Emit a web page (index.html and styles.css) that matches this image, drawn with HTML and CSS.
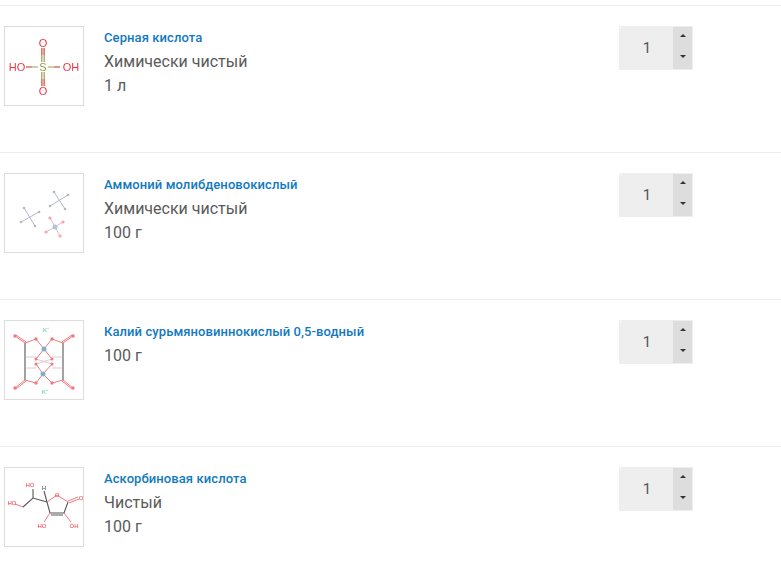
FILE: index.html
```html
<!DOCTYPE html>
<html lang="ru">
<head>
<meta charset="utf-8">
<title>Корзина</title>
<link rel="stylesheet" href="styles.css">
</head>
<body>
<main class="list">
  <article class="row">
    <div class="thumb">
      <svg class="mol" viewBox="0 0 78 78" width="78" height="78">
        <g class="b-olive"><path d="M36.800 35V21M39.200 35V21M36.800 45V59M39.200 45V59M33 40H21M43 40H55"/></g>
        <g class="b-red"><path d="M36.800 28V21M39.200 28V21M36.800 52V59M39.200 52V59M27 40H21M49 40H55"/></g>
        <text class="a-red big" x="38" y="20">O</text>
        <text class="a-red big" x="38" y="68">O</text>
        <text class="a-red big" x="12" y="44">HO</text>
        <text class="a-red big" x="66" y="44">OH</text>
        <text class="a-olive big" x="38" y="44">S</text>
      </svg>
    </div>
    <div class="info">
      <a class="name" href="#">Серная кислота</a>
      <p class="line">Химически чистый</p>
      <p class="line">1 л</p>
    </div>
    <div class="spinner">
      <div class="value">1</div>
      <div class="arrows">
        <button class="arrow up" type="button"></button>
        <button class="arrow down" type="button"></button>
      </div>
    </div>
  </article>

  <article class="row">
    <div class="thumb">
      <svg class="mol soft faint" viewBox="0 0 78 78" width="78" height="78">
        <g class="b-violet"><path d="M19 34L30 52M34 38L16 48M49 18L60 35M63 21L45 32"/></g>
        <g class="dots-grey"><circle cx="19" cy="34" r="1.300"/><circle cx="34" cy="38" r="1.300"/><circle cx="16" cy="48" r="1.300"/><circle cx="30" cy="52" r="1.300"/><circle cx="49" cy="18" r="1.300"/><circle cx="63" cy="21" r="1.300"/><circle cx="45" cy="32" r="1.300"/><circle cx="60" cy="35" r="1.300"/></g>
        <g class="b-pink"><path d="M45 44L55 62M58 48L41 58"/></g>
        <g class="dots-red"><circle cx="45" cy="44" r="1.600"/><circle cx="58" cy="48" r="1.600"/><circle cx="41" cy="58" r="1.600"/><circle cx="55" cy="62" r="1.600"/></g>
        <circle class="metal" cx="50" cy="53" r="2.500"/>
      </svg>
    </div>
    <div class="info">
      <a class="name" href="#">Аммоний молибденовокислый</a>
      <p class="line">Химически чистый</p>
      <p class="line">100 г</p>
    </div>
    <div class="spinner">
      <div class="value">1</div>
      <div class="arrows">
        <button class="arrow up" type="button"></button>
        <button class="arrow down" type="button"></button>
      </div>
    </div>
  </article>

  <article class="row">
    <div class="thumb">
      <svg class="mol soft" viewBox="0 0 78 78" width="78" height="78">
        <g class="b-dark"><path d="M20 22V59M58 22V59"/></g>
        <g class="b-faint"><path d="M20 36H31M58 36H47M20 47H31M58 47H47M31 38L47 43M47 38L31 43"/></g>
        <g class="b-red thin"><path d="M10 15L20 22M11 14L21 21M20 22L31 18M58 22L47 18M68 15L58 22M67 14L57 21M10 67L20 59M11 68L21 60M20 59L31 62M58 59L47 62M68 67L58 59M67 68L57 60M31 18L39 28M47 18L39 28M31 38L39 28M47 38L39 28M31 43L38 53M47 43L38 53M31 62L38 53M47 62L38 53"/></g>
        <g class="dots-red"><circle cx="10" cy="15" r="1.700"/><circle cx="68" cy="15" r="1.700"/><circle cx="10" cy="67" r="1.700"/><circle cx="68" cy="67" r="1.700"/><circle cx="31" cy="18" r="1.700"/><circle cx="47" cy="18" r="1.700"/><circle cx="31" cy="62" r="1.700"/><circle cx="47" cy="62" r="1.700"/><circle cx="31" cy="38" r="1.500"/><circle cx="47" cy="38" r="1.500"/><circle cx="31" cy="43" r="1.500"/><circle cx="47" cy="43" r="1.500"/></g>
        <circle class="metal" cx="39" cy="28" r="2.500"/>
        <circle class="metal" cx="38" cy="53" r="2.500"/>
        <text class="a-teal" x="41" y="11">K⁺</text>
        <text class="a-teal" x="40" y="73">K⁺</text>
      </svg>
    </div>
    <div class="info">
      <a class="name" href="#">Калий сурьмяновиннокислый 0,5-водный</a>
      <p class="line">100 г</p>
    </div>
    <div class="spinner">
      <div class="value">1</div>
      <div class="arrows">
        <button class="arrow up" type="button"></button>
        <button class="arrow down" type="button"></button>
      </div>
    </div>
  </article>

  <article class="row">
    <div class="thumb">
      <svg class="mol soft" viewBox="0 0 78 78" width="78" height="78">
        <g class="b-dark"><path d="M42 34L45 45L59 45L63 34M46 47H58M42 34L28 30L18 39M28 30V21M42 34L39 23"/></g>
        <g class="b-red thin"><path d="M42 34L52 27L63 34M63 33L73 29M64 35L74 31M45 45L39 54M59 45L66 54M18 39L10 36"/></g>
        <text class="a-red" x="52" y="29">O</text>
        <text class="a-red" x="76" y="32">O</text>
        <text class="a-red" x="25" y="19">HO</text>
        <text class="a-red" x="7" y="37">HO</text>
        <text class="a-red" x="37" y="60">HO</text>
        <text class="a-red" x="69" y="60">OH</text>
        <text class="a-dark" x="39" y="22">H</text>
      </svg>
    </div>
    <div class="info">
      <a class="name" href="#">Аскорбиновая кислота</a>
      <p class="line">Чистый</p>
      <p class="line">100 г</p>
    </div>
    <div class="spinner">
      <div class="value">1</div>
      <div class="arrows">
        <button class="arrow up" type="button"></button>
        <button class="arrow down" type="button"></button>
      </div>
    </div>
  </article>
</main>
</body>
</html>
```

FILE: styles.css
```css
html, body {
  margin: 0;
  padding: 0;
  background: #fff;
}

body {
  font-family: Roboto, "Liberation Sans", sans-serif;
  overflow: hidden;
}

.list {
  padding-top: 5px;
}

.row {
  display: flex;
  align-items: flex-start;
  height: 146px;
  border-top: 1px solid #eeeeee;
  padding-left: 4px;
}

.thumb {
  width: 78px;
  height: 78px;
  margin-top: 20px;
  border: 1px solid #dcdcdc;
  flex: none;
}

.mol {
  display: block;
  filter: blur(0.45px);
  opacity: 0.9;
}

.soft {
  filter: blur(0.7px);
}

.faint {
  opacity: 0.6;
}

.mol path {
  fill: none;
  stroke-width: 1.2;
}

.b-olive path { stroke: #8f9440; }
.b-red path { stroke: #f0505a; }
.b-red.thin path { stroke-width: 1; stroke: #ee6a72; }
.b-dark path { stroke: #444; stroke-width: 1.1; }
.b-faint path { stroke: #c9b8bb; stroke-width: 0.8; }
.b-violet path { stroke: #8083c0; stroke-width: 1; }
.b-pink path { stroke: #e48a98; stroke-width: 1; }
.dots-grey circle { fill: #888; }
.dots-red circle { fill: #f06a74; }
.metal { fill: #6fa8c4; }

.mol text {
  font-family: "Liberation Sans", sans-serif;
  font-size: 6px;
  text-anchor: middle;
}

.mol text.big {
  font-size: 11px;
}

.a-red { fill: #f0202e; }
.a-olive { fill: #8a8f30; }
.a-teal { fill: #30c09a; }
.a-dark { fill: #333; }

.info {
  flex: 1;
  margin-left: 20px;
  padding-top: 24px;
}

.name {
  display: block;
  font-size: 13px;
  font-weight: 500;
  letter-spacing: 0.09px;
  line-height: 16px;
  color: #1279c0;
  text-decoration: none;
  margin-bottom: 4px;
}

.line {
  margin: 0;
  font-size: 16px;
  line-height: 24px;
  color: #5a5a5a;
}

.spinner {
  display: flex;
  box-sizing: border-box;
  width: 74px;
  height: 44px;
  margin-top: 20px;
  margin-right: 88px;
  border: 1px solid #eeeeee;
  flex: none;
}

.value {
  flex: 1;
  display: flex;
  align-items: center;
  justify-content: center;
  padding-left: 1px;
  background: #eeeeee;
  border-radius: 3px 0 0 0;
  font-size: 15px;
  color: #555555;
}

.arrows {
  width: 19px;
  display: flex;
  flex-direction: column;
}

.arrow {
  flex: 1;
  position: relative;
  border: 0;
  padding: 0;
  background: #dddddd;
}

.arrow::after {
  content: "";
  position: absolute;
  left: 7px;
  width: 0;
  height: 0;
  border-left: 3px solid transparent;
  border-right: 3px solid transparent;
}

.up::after {
  top: 7px;
  border-bottom: 3px solid #333;
}

.down::after {
  top: 7px;
  border-top: 3px solid #333;
}
```
